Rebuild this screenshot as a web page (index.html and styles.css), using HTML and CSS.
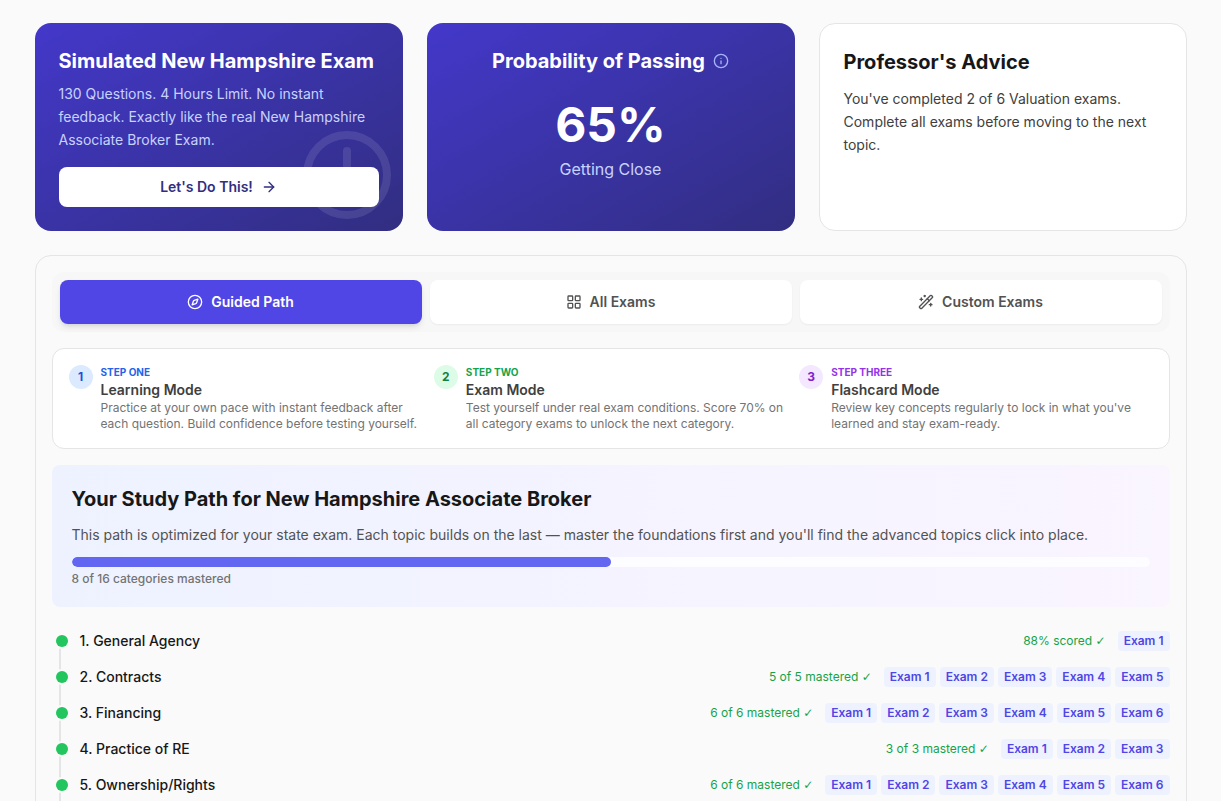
FILE: index.html
```
<!DOCTYPE html>
<html lang="en">
<head>
    <meta charset="UTF-8">
    <meta name="viewport" content="width=device-width, initial-scale=1">
    <title>New Hampshire Associate Broker Exam Prep</title>
    <link rel="stylesheet" href="styles.css">
</head>
<body>
    <main class="container">
        <div class="cards">
            <section class="card card-dark">
                <svg class="card-clock" viewBox="0 0 24 24"><circle cx="12" cy="12" r="10"/><path d="M12 6v6l4 2"/></svg>
                <h2>Simulated New Hampshire Exam</h2>
                <p class="card-text">130 Questions. 4 Hours Limit. No instant feedback. Exactly like the real New Hampshire Associate Broker Exam.</p>
                <button class="start-btn" type="button">
                    Let's Do This!
                    <svg class="icon" viewBox="0 0 24 24"><path d="M5 12h14"/><path d="m12 5 7 7-7 7"/></svg>
                </button>
            </section>

            <section class="card card-dark card-score">
                <div class="score-title">
                    <h2>Probability of Passing</h2>
                    <button class="info-btn" type="button" aria-label="More info">
                        <svg class="icon" viewBox="0 0 24 24"><circle cx="12" cy="12" r="10"/><path d="M12 16v-4"/><path d="M12 8h.01"/></svg>
                    </button>
                </div>
                <div class="score">65%</div>
                <div class="score-label">Getting Close</div>
            </section>

            <section class="card card-light">
                <h2>Professor's Advice</h2>
                <p class="card-text">You've completed 2 of 6 Valuation exams. Complete all exams before moving to the next topic.</p>
            </section>
        </div>

        <div class="panel">
            <div class="tabs">
                <button class="tab active" type="button">
                    <svg class="icon" viewBox="0 0 24 24"><circle cx="12" cy="12" r="10"/><path d="m16.24 7.76-1.804 5.411a2 2 0 0 1-1.265 1.265L7.76 16.24l1.804-5.411a2 2 0 0 1 1.265-1.265z"/></svg>
                    Guided Path
                </button>
                <button class="tab" type="button">
                    <svg class="icon" viewBox="0 0 24 24"><rect x="3" y="3" width="7" height="7" rx="1"/><rect x="14" y="3" width="7" height="7" rx="1"/><rect x="14" y="14" width="7" height="7" rx="1"/><rect x="3" y="14" width="7" height="7" rx="1"/></svg>
                    All Exams
                </button>
                <button class="tab" type="button">
                    <svg class="icon" viewBox="0 0 24 24"><path d="m21.64 3.64-1.28-1.28a1.21 1.21 0 0 0-1.72 0L2.36 18.64a1.21 1.21 0 0 0 0 1.72l1.28 1.28a1.2 1.2 0 0 0 1.72 0L21.64 5.36a1.2 1.2 0 0 0 0-1.72"/><path d="m14 7 3 3"/><path d="M5 6v4"/><path d="M19 14v4"/><path d="M10 2v2"/><path d="M7 8H3"/><path d="M21 16h-4"/><path d="M11 3H9"/></svg>
                    Custom Exams
                </button>
            </div>

            <div class="steps">
                <div class="step step-blue">
                    <span class="step-num">1</span>
                    <div>
                        <div class="step-label">STEP ONE</div>
                        <h3>Learning Mode</h3>
                        <p>Practice at your own pace with instant feedback after each question. Build confidence before testing yourself.</p>
                    </div>
                </div>
                <div class="step step-green">
                    <span class="step-num">2</span>
                    <div>
                        <div class="step-label">STEP TWO</div>
                        <h3>Exam Mode</h3>
                        <p>Test yourself under real exam conditions. Score 70% on all category exams to unlock the next category.</p>
                    </div>
                </div>
                <div class="step step-purple">
                    <span class="step-num">3</span>
                    <div>
                        <div class="step-label">STEP THREE</div>
                        <h3>Flashcard Mode</h3>
                        <p>Review key concepts regularly to lock in what you've learned and stay exam-ready.</p>
                    </div>
                </div>
            </div>

            <section class="path">
                <h2>Your Study Path for New Hampshire Associate Broker</h2>
                <p>This path is optimized for your state exam. Each topic builds on the last — master the foundations first and you'll find the advanced topics click into place.</p>
                <div class="bar"><div class="bar-fill" style="width: 50%"></div></div>
                <div class="bar-label">8 of 16 categories mastered</div>
            </section>

            <ol class="topics">
                <li>
                    <span class="dot"></span>
                    <span class="topic-name">1. General Agency</span>
                    <span class="status">88% scored <span class="tick">✓</span></span>
                    <div class="exams">
                        <button type="button">Exam 1</button>
                    </div>
                </li>
                <li>
                    <span class="dot"></span>
                    <span class="topic-name">2. Contracts</span>
                    <span class="status">5 of 5 mastered <span class="tick">✓</span></span>
                    <div class="exams">
                        <button type="button">Exam 1</button>
                        <button type="button">Exam 2</button>
                        <button type="button">Exam 3</button>
                        <button type="button">Exam 4</button>
                        <button type="button">Exam 5</button>
                    </div>
                </li>
                <li>
                    <span class="dot"></span>
                    <span class="topic-name">3. Financing</span>
                    <span class="status">6 of 6 mastered <span class="tick">✓</span></span>
                    <div class="exams">
                        <button type="button">Exam 1</button>
                        <button type="button">Exam 2</button>
                        <button type="button">Exam 3</button>
                        <button type="button">Exam 4</button>
                        <button type="button">Exam 5</button>
                        <button type="button">Exam 6</button>
                    </div>
                </li>
                <li>
                    <span class="dot"></span>
                    <span class="topic-name">4. Practice of RE</span>
                    <span class="status">3 of 3 mastered <span class="tick">✓</span></span>
                    <div class="exams">
                        <button type="button">Exam 1</button>
                        <button type="button">Exam 2</button>
                        <button type="button">Exam 3</button>
                    </div>
                </li>
                <li>
                    <span class="dot"></span>
                    <span class="topic-name">5. Ownership/Rights</span>
                    <span class="status">6 of 6 mastered <span class="tick">✓</span></span>
                    <div class="exams">
                        <button type="button">Exam 1</button>
                        <button type="button">Exam 2</button>
                        <button type="button">Exam 3</button>
                        <button type="button">Exam 4</button>
                        <button type="button">Exam 5</button>
                        <button type="button">Exam 6</button>
                    </div>
                </li>
            </ol>
        </div>
    </main>
</body>
</html>
```
FILE: styles.css
```
* {
    box-sizing: border-box;
}
body {
    margin: 0;
    padding: 23px 24px 0;
    background: #fafafa;
    color: #171717;
    font-family: Inter, "Liberation Sans", sans-serif;
    font-size: 14px;
    line-height: 20px;
}
h2, h3, p, ol {
    margin: 0;
    padding: 0;
}
h2 {
    font-size: 20px;
    line-height: 28px;
    font-weight: 700;
}
button {
    font: inherit;
    border: none;
    cursor: pointer;
}
.icon {
    width: 16px;
    height: 16px;
    flex-shrink: 0;
}
svg {
    fill: none;
    stroke: currentColor;
    stroke-width: 2;
    stroke-linecap: round;
    stroke-linejoin: round;
}
.container {
    max-width: 1152px;
    margin: 0 auto;
}

/* top cards */
.cards {
    display: grid;
    grid-template-columns: repeat(3, 1fr);
    gap: 24px;
    margin-bottom: 24px;
}
.card {
    position: relative;
    padding: 24px;
    border-radius: 16px;
}
.card-dark {
    background: linear-gradient(to bottom right, #4338ca, #312e81);
    color: #fff;
}
.card-light {
    background: #fff;
    border: 1px solid #e5e5e5;
}
.card-text {
    margin-top: 7px;
    line-height: 23px;
    color: #c7d2fe;
}
.card-light .card-text {
    margin-top: 11px;
    color: #404040;
}
.card-clock {
    position: absolute;
    right: 8px;
    bottom: 8px;
    width: 96px;
    height: 96px;
    opacity: 0.1;
}
.start-btn {
    position: relative;
    display: flex;
    align-items: center;
    justify-content: center;
    gap: 8px;
    width: 100%;
    margin-top: 16px;
    padding: 10px 16px;
    border-radius: 8px;
    background: #fff;
    color: #312e81;
    font-weight: 600;
}
.card-score {
    text-align: center;
}
.score-title {
    display: flex;
    align-items: center;
    justify-content: center;
    gap: 8px;
}
.info-btn {
    display: flex;
    padding: 0;
    background: none;
    color: #a5b4fc;
}
.score {
    margin-top: 26px;
    font-size: 48px;
    line-height: 48px;
    font-weight: 700;
}
.score-label {
    margin-top: 8px;
    font-size: 16px;
    line-height: 24px;
    color: #c7d2fe;
}

/* main panel */
.panel {
    padding: 16px;
    border: 1px solid #e5e5e5;
    border-radius: 16px;
}
.tabs {
    display: grid;
    grid-template-columns: repeat(3, 1fr);
    gap: 8px;
    padding: 8px;
    border-radius: 12px;
    background: #f7f7f7;
}
.tab {
    display: flex;
    align-items: center;
    justify-content: center;
    gap: 8px;
    padding: 12px 16px;
    border-radius: 8px;
    background: #fff;
    color: #525252;
    font-weight: 600;
    box-shadow: 0 1px 2px rgba(0, 0, 0, 0.05);
}
.tab.active {
    background: #4f46e5;
    color: #fff;
    box-shadow: 0 4px 6px -1px rgba(0, 0, 0, 0.1), 0 2px 4px -2px rgba(0, 0, 0, 0.1);
}

.steps {
    display: grid;
    grid-template-columns: repeat(3, 1fr);
    gap: 12px;
    margin-top: 16px;
    padding: 16px;
    border: 1px solid #e5e5e5;
    border-radius: 12px;
    background: #fff;
}
.step {
    display: flex;
    gap: 8px;
}
.step-num {
    display: flex;
    align-items: center;
    justify-content: center;
    flex-shrink: 0;
    width: 24px;
    height: 24px;
    border-radius: 50%;
    font-size: 12px;
    font-weight: 700;
}
.step-label {
    font-size: 10px;
    line-height: 15px;
    font-weight: 700;
}
.step h3 {
    font-size: 14px;
    line-height: 20px;
    font-weight: 600;
    color: #404040;
}
.step p {
    font-size: 12px;
    line-height: 16px;
    color: #737373;
}
.step-blue .step-num {
    background: #dbeafe;
    color: #1d4ed8;
}
.step-blue .step-label {
    color: #2563eb;
}
.step-green .step-num {
    background: #dcfce7;
    color: #15803d;
}
.step-green .step-label {
    color: #16a34a;
}
.step-purple .step-num {
    background: #f3e8ff;
    color: #7e22ce;
}
.step-purple .step-label {
    color: #9333ea;
}

/* study path */
.path {
    margin-top: 16px;
    padding: 20px;
    border-radius: 8px;
    background: linear-gradient(to right, #eef2ff, #faf5ff);
}
.path p {
    margin: 12px 0;
    color: #525252;
}
.bar {
    height: 10px;
    border-radius: 5px;
    background: #fdfdff;
    overflow: hidden;
}
.bar-fill {
    height: 100%;
    border-radius: 5px;
    background: #6366f1;
}
.bar-label {
    margin-top: 4px;
    font-size: 12px;
    line-height: 16px;
    font-weight: 500;
    color: #737373;
}

.topics {
    margin-top: 16px;
    list-style: none;
}
.topics li {
    position: relative;
    display: flex;
    align-items: center;
    gap: 12px;
    min-height: 36px;
    padding-left: 4px;
}
/* vertical line behind the dots */
.topics li::before {
    content: "";
    position: absolute;
    top: 0;
    bottom: 0;
    left: 7px;
    width: 2px;
    background: #e5e5e5;
}
.topics li:first-child::before {
    top: 50%;
}
.dot {
    position: relative;
    flex-shrink: 0;
    width: 12px;
    height: 12px;
    border-radius: 50%;
    background: #22c55e;
    box-shadow: 0 0 0 2px #fafafa;
}
.topic-name {
    flex: 1;
    font-weight: 500;
}
.status {
    font-size: 12px;
    line-height: 16px;
    color: #16a34a;
}
.tick {
    font-family: "DejaVu Sans", sans-serif;
}
.exams {
    display: flex;
    gap: 4px;
}
.exams button {
    padding: 2px 6px;
    border-radius: 4px;
    background: #eef2ff;
    color: #4f46e5;
    font-size: 12px;
    line-height: 16px;
    font-weight: 600;
}
```
